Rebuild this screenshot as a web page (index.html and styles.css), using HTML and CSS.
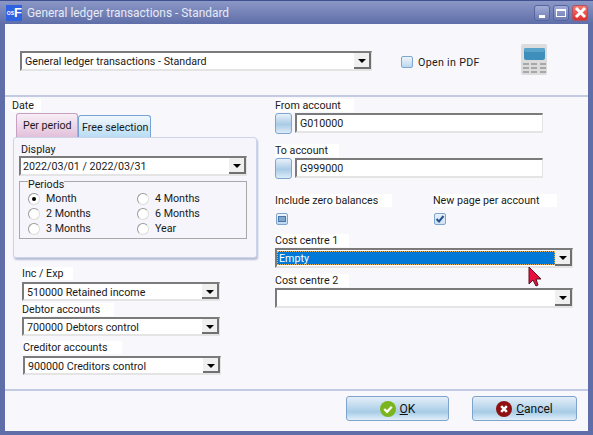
FILE: index.html
```html
<!DOCTYPE html>
<html lang="en">
<head>
  <meta charset="UTF-8" />
  <title>General ledger transactions - Standard</title>
  <link rel="stylesheet" href="styles.css">
</head>
<body>
  <div class="window">
    <div class="titlebar">
      <span class="appicon"><small>OS</small>F</span>
      <span class="title">General ledger transactions - Standard</span>
      <span class="winbtn"><i class="min"></i></span>
      <span class="winbtn"><i class="max"></i></span>
      <span class="winbtn close">
        <svg width="13" height="13" viewBox="0 0 13 13"><path d="M2 2l9 9M11 2l-9 9" stroke="#fff" stroke-width="3"/></svg>
      </span>
    </div>

    <div class="client">
      <div class="top">
        <div class="combo report">
          <span class="value">General ledger transactions - Standard</span>
          <span class="arrow"></span>
        </div>
        <span class="check pdf"></span>
        <span class="pdf-label">Open in PDF</span>
        <svg class="calc" width="26" height="31" viewBox="0 0 26 31">
          <rect width="26" height="31" rx="2" fill="#dcdcdc"/>
          <rect x="3" y="4" width="21" height="12" rx="2" fill="#3f8fbc"/>
          <rect x="3" y="4" width="21" height="4" rx="2" fill="#5aa3cb"/>
          <g fill="#a8a8a8">
            <rect x="2" y="19" width="6" height="2"/><rect x="10" y="19" width="6" height="2"/><rect x="19" y="19" width="6" height="2"/>
            <rect x="2" y="23" width="6" height="2"/><rect x="10" y="23" width="6" height="2"/><rect x="19" y="23" width="6" height="2"/>
            <rect x="2" y="27" width="6" height="2"/><rect x="10" y="27" width="6" height="2"/><rect x="19" y="27" width="6" height="2"/>
          </g>
        </svg>
      </div>

      <div class="main">
        <div class="left">
          <div class="label date-label">Date</div>
          <div class="tabs">
            <span class="tab active">Per period</span>
            <span class="tab">Free selection</span>
          </div>
          <div class="panel">
            <div class="display-label">Display</div>
            <div class="combo display">
              <span class="value">2022/03/01 / 2022/03/31</span>
              <span class="arrow"></span>
            </div>
            <div class="group">
              <span class="legend">Periods</span>
              <div class="radios">
                <label class="radio"><i class="dot on"></i>Month</label>
                <label class="radio"><i class="dot"></i>4 Months</label>
                <label class="radio"><i class="dot"></i>2 Months</label>
                <label class="radio"><i class="dot"></i>6 Months</label>
                <label class="radio"><i class="dot"></i>3 Months</label>
                <label class="radio"><i class="dot"></i>Year</label>
              </div>
            </div>
          </div>

          <div class="accounts">
            <div class="label l-inc">Inc / Exp</div>
            <div class="combo small">
              <span class="value">510000 Retained income</span>
              <span class="arrow"></span>
            </div>
            <div class="label l-debtor">Debtor accounts</div>
            <div class="combo small">
              <span class="value">700000 Debtors control</span>
              <span class="arrow"></span>
            </div>
            <div class="label l-creditor">Creditor accounts</div>
            <div class="combo small creditor">
              <span class="value">900000 Creditors control</span>
              <span class="arrow"></span>
            </div>
          </div>
        </div>

        <div class="right">
          <div class="label l-from">From account</div>
          <div class="lookup">
            <span class="pick"></span>
            <div class="textbox">G010000</div>
          </div>
          <div class="label l-to">To account</div>
          <div class="lookup">
            <span class="pick"></span>
            <div class="textbox">G999000</div>
          </div>

          <div class="options">
            <div>
              <div class="label l-zero">Include zero balances</div>
              <span class="check mixed"><i></i></span>
            </div>
            <div>
              <div class="label l-page">New page per account</div>
              <span class="check ticked">
                <svg width="10" height="10" viewBox="0 0 10 10"><path d="M1.5 5l2.5 2.5L8.5 2" fill="none" stroke="#27528f" stroke-width="2"/></svg>
              </span>
            </div>
          </div>

          <div class="label l-cost">Cost centre 1</div>
          <div class="combo cost">
            <span class="value selected">Empty</span>
            <span class="arrow"></span>
          </div>
          <div class="label l-cost second">Cost centre 2</div>
          <div class="combo cost">
            <span class="value"></span>
            <span class="arrow"></span>
          </div>
        </div>
      </div>

      <div class="footer">
        <button class="btn ok">
          <svg width="16" height="16" viewBox="0 0 17 17">
            <circle cx="8.5" cy="8.5" r="8.5" fill="#7ab51d"/>
            <path d="M4.5 8.5l3 3 5-5.5" fill="none" stroke="#fff" stroke-width="2.4"/>
          </svg>
          <span><u>O</u>K</span>
        </button>
        <button class="btn cancel">
          <svg width="16" height="16" viewBox="0 0 17 17">
            <circle cx="8.5" cy="8.5" r="8.5" fill="#8f1010"/>
            <path d="M5.5 5.5l6 6M11.5 5.5l-6 6" stroke="#fff" stroke-width="2.6"/>
          </svg>
          <span><u>C</u>ancel</span>
        </button>
      </div>
    </div>

    <svg class="cursor" width="14" height="21" viewBox="0 0 14 21">
      <path d="M1 1v17l4-4 3 6 2-1-2-6h5z" fill="#e8103c" stroke="#5a1020" stroke-width="1"/>
    </svg>
  </div>
</body>
</html>
```

FILE: styles.css
```css
* {
  box-sizing: border-box;
}
body {
  margin: 0;
  font-family: Roboto, "Liberation Sans", sans-serif;
  font-size: 10.7px;
  color: #1a1a1a;
}
.window {
  position: relative;
  width: 593px;
  height: 435px;
  background: #5f6ea8;
  border-top: 1px solid #3f4f90;
  overflow: hidden;
}

/* title bar */
.titlebar {
  display: flex;
  align-items: center;
  height: 23px;
  padding: 0 5px 0 6px;
  background: linear-gradient(#8b97c6, #5f6ea8);
}
.appicon {
  width: 16px;
  height: 16px;
  background: #2f62e0;
  color: #fff;
  font: bold 13px/16px "Liberation Sans", sans-serif;
  text-align: right;
  white-space: nowrap;
  overflow: hidden;
}
.appicon small {
  font-size: 5px;
  vertical-align: 2px;
}
.title {
  flex: 1;
  margin-left: 5px;
  color: #e6eaf6;
  font-size: 11.9px;
}
.winbtn {
  display: flex;
  align-items: center;
  justify-content: center;
  width: 16px;
  height: 16px;
  margin-left: 3px;
  border: 1px solid #56659f;
  border-radius: 3px;
  background: linear-gradient(#a3add6, #6d7bb4);
}
.winbtn.close {
  margin-left: 3px;
  background: linear-gradient(#f77a70, #e0302c);
  border-color: #b05060;
}
.min {
  width: 6px;
  height: 3px;
  margin-top: 8px;
  background: #fff;
}
.max {
  width: 10px;
  height: 8px;
  border: 1px solid #fff;
  border-top-width: 2px;
}

/* client area */
.client {
  height: 407px;
  margin: 0 5px;
  background: #f8f8fc;
}
.top {
  display: flex;
  align-items: flex-start;
  height: 73px;
  padding: 0 41px 0 15px;
  border-bottom: 2px solid #c3cbe2;
}
.report {
  width: 352px;
  height: 20px;
  margin-top: 27px;
}
.check {
  display: flex;
  align-items: center;
  justify-content: center;
  width: 12px;
  height: 12px;
  border: 1px solid #7ea6cf;
  border-radius: 2px;
  background: linear-gradient(#eef4fa, #bcd8ef);
}
.pdf {
  margin: 32px 0 0 29px;
}
.pdf-label {
  margin: 31px 0 0 5px;
  line-height: 15px;
  letter-spacing: 0.3px;
}
.calc {
  margin: 20px 0 0 auto;
}

/* combo and text boxes */
.combo {
  display: flex;
  background: #fff;
  border-top: 2px solid #7b7b7b;
  border-left: 2px solid #7b7b7b;
  border-right: 1px solid #e4e4e4;
  border-bottom: 2px solid #e4e4e4;
}
.value {
  flex: 1;
  padding-left: 3px;
  line-height: 18px;
  white-space: nowrap;
}
.arrow {
  position: relative;
  width: 17px;
  background: #f0f0f0;
  border-right: 2px solid #707070;
  border-bottom: 2px solid #707070;
}
.arrow::after {
  content: "";
  position: absolute;
  left: 4px;
  top: 6px;
  border-top: 4px solid #000;
  border-left: 4px solid transparent;
  border-right: 4px solid transparent;
}
.label {
  height: 13px;
  margin-bottom: 1px;
  line-height: 14px;
  background: #fff;
  white-space: nowrap;
}

/* left column */
.main {
  display: flex;
  height: 294px;
  padding-top: 2px;
  border-bottom: 2px solid #c3cbe2;
}
.left {
  width: 270px;
  padding-left: 7px;
}
.date-label {
  width: 29px;
}
.tabs {
  display: flex;
  align-items: flex-end;
  height: 24px;
  margin-left: 4px;
}
.tab {
  width: 73px;
  height: 22px;
  padding-left: 3px;
  line-height: 24px;
  white-space: nowrap;
  border: 1px solid #76a3d6;
  border-bottom: 0;
  border-radius: 3px 3px 0 0;
  background: linear-gradient(#f2f8fd, #b8dcf5);
}
.tab.active {
  width: 62px;
  height: 24px;
  padding-left: 6px;
  border-color: #c8a0c4;
  background: linear-gradient(#f8eef6, #e2c0da);
}
.panel {
  width: 244px;
  height: 121px;
  margin-left: 1px;
  padding: 5px 5px;
  background: #f5f5fb;
  border: 1px solid #ccd4ea;
  border-radius: 3px;
  box-shadow: 1px 2px 2px #b8bdd4;
}
.display-label {
  height: 13px;
  line-height: 13px;
  margin-left: 2px;
}
.display {
  width: 228px;
  height: 20px;
}
.display .value {
  padding-left: 2px;
}
.group {
  width: 228px;
  height: 58px;
  margin-top: 5px;
  padding-left: 8px;
  border: 1px solid #a8a8a8;
}
.legend {
  display: block;
  width: 36px;
  height: 13px;
  margin-top: -4px;
  line-height: 13px;
  background: #f5f5fb;
  white-space: nowrap;
}
.radios {
  display: grid;
  grid-template-columns: 109px 1fr;
  grid-auto-rows: 15px;
}
.radio {
  display: flex;
  align-items: center;
  line-height: 15px;
}
.dot {
  position: relative;
  width: 12px;
  height: 12px;
  margin-right: 6px;
  background: #fff;
  border: 1px solid #9a9a9a;
  border-right-color: #ddd;
  border-bottom-color: #ddd;
  border-radius: 50%;
}
.dot.on::after {
  content: "";
  position: absolute;
  left: 3px;
  top: 3px;
  width: 4px;
  height: 4px;
  background: #000;
  border-radius: 50%;
}
.accounts {
  margin: 9px 0 0 10px;
}
.small {
  width: 198px;
  height: 19px;
}
.small .value {
  line-height: 17px;
}
.l-inc { width: 51px; margin-bottom: 2px; }
.l-debtor { width: 92px; margin-top: 2px; }
.l-creditor { width: 99px; margin: 5px 0 2px 1px; }
.creditor { margin-left: 1px; }

/* right column */
.right {
  flex: 1;
}
.l-from { width: 79px; }
.l-to { width: 64px; margin-top: 10px; }
.lookup {
  display: flex;
  gap: 3px;
}
.pick {
  width: 17px;
  height: 21px;
  border: 1px solid #7ea6cf;
  border-radius: 3px;
  background: linear-gradient(#e8f1f9, #a9cbe6 55%, #dcecf8);
}
.textbox {
  width: 248px;
  height: 20px;
  padding-left: 3px;
  line-height: 18px;
  background: #fff;
  border-top: 2px solid #7b7b7b;
  border-left: 2px solid #7b7b7b;
  border-right: 1px solid #e4e4e4;
  border-bottom: 2px solid #e4e4e4;
}
.options {
  display: flex;
  height: 40px;
  margin-top: 15px;
}
.options > div:first-child {
  width: 158px;
}
.l-zero { width: 117px; }
.l-page { width: 124px; }
.options .check {
  margin: 6px 0 0 1px;
}
.mixed i {
  width: 8px;
  height: 6px;
  background: #7ea6cf;
  border: 1px solid #4a76a8;
}
.ticked {
  background: linear-gradient(#e8f1f9, #cfe2f3);
}
.l-cost { width: 74px; }
.second { margin-top: 6px; }
.cost {
  width: 298px;
  height: 20px;
}
.selected {
  margin: 1px 0;
  padding-left: 2px;
  line-height: 15px;
  color: #fff;
  background: #0078d7;
  outline: 1px dotted #e0b060;
  outline-offset: -1px;
}

/* footer */
.footer {
  display: flex;
  justify-content: flex-end;
  gap: 23px;
  height: 40px;
  padding: 5px 11px 0 0;
}
.btn {
  display: flex;
  align-items: center;
  justify-content: center;
  gap: 4px;
  width: 103px;
  height: 25px;
  padding: 0;
  font: inherit;
  font-size: 12px;
  color: #111;
  border: 1px solid #7ea3cc;
  border-radius: 3px;
  background: linear-gradient(#e4eff8, #a8cce6 65%, #e0eef9);
}
.cancel {
  width: 105px;
}
.cursor {
  position: absolute;
  left: 528px;
  top: 265px;
}
```
